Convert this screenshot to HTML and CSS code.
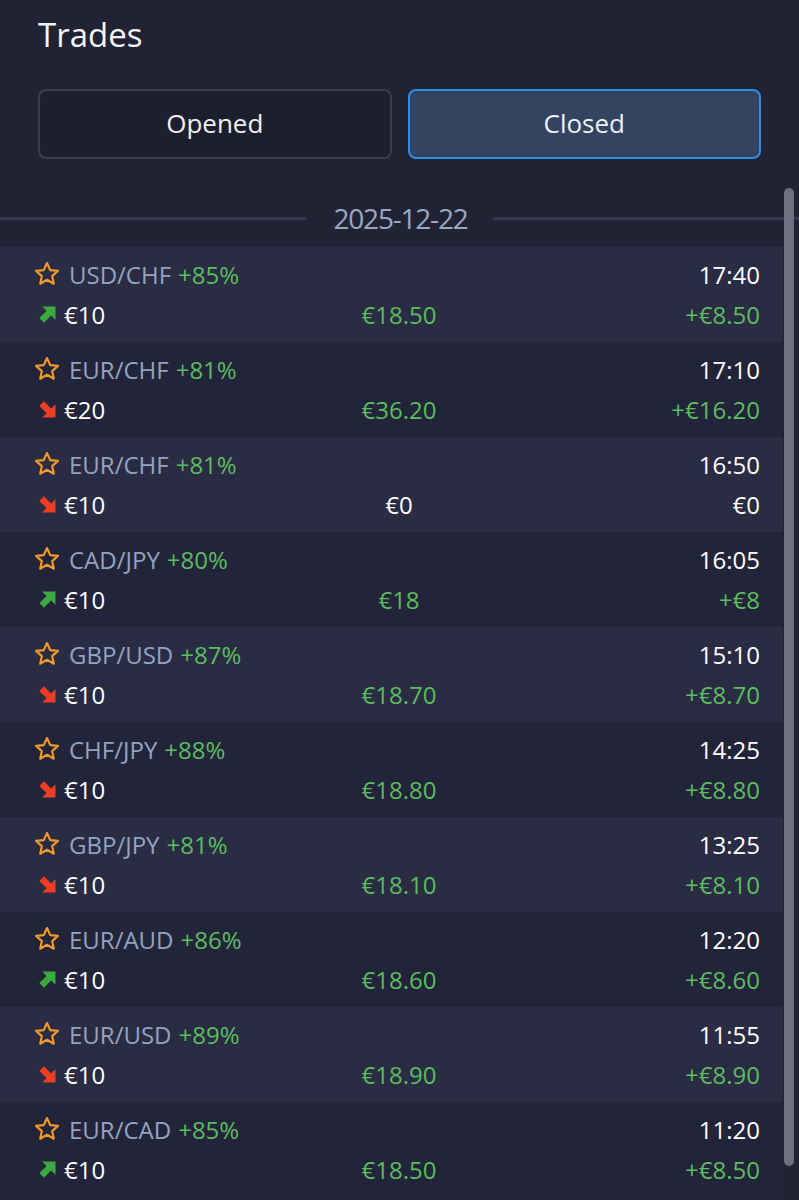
FILE: index.html
```html
<!DOCTYPE html>
<html lang="en">
<head>
<meta charset="utf-8">
<title>Trades</title>
<link rel="stylesheet" href="styles.css">
</head>
<body>
<svg width="0" height="0" class="defs" aria-hidden="true">
  <defs>
    <symbol id="star" viewBox="0 0 24 24">
      <path d="M12 2.6l2.75 6.1 6.65.65-5 4.45 1.45 6.55L12 16.95 6.15 20.35 7.6 13.8l-5-4.45 6.65-.65z" fill="none" stroke="#f29a2e" stroke-width="1.8" stroke-linejoin="round"/>
    </symbol>
    <symbol id="up" viewBox="0 0 16 16">
      <polygon points="3,0.5 15.5,0.5 15.5,13 11.4,8.9 4.6,15.7 0.3,11.4 7.1,4.6" fill="#3aaa3f"/>
    </symbol>
    <symbol id="down" viewBox="0 0 16 16">
      <polygon points="3,15.5 15.5,15.5 15.5,3 11.4,7.1 4.6,0.3 0.3,4.6 7.1,11.4" fill="#ee3d22"/>
    </symbol>
  </defs>
</svg>

<header class="header">
  <h1 class="title">Trades</h1>
  <div class="tabs">
    <button class="tab">Opened</button>
    <button class="tab tab-active">Closed</button>
  </div>
</header>

<section class="list">
  <div class="date-sep"><span class="line"></span><span class="date">2025-12-22</span><span class="line"></span></div>

  <div class="row alt">
    <div class="line1"><svg class="star"><use href="#star"/></svg><span class="pair">USD/CHF</span><span class="pct">+85%</span><span class="time">17:40</span></div>
    <div class="line2"><span class="amt"><svg class="arrow"><use href="#up"/></svg>€10</span><span class="mid green">€18.50</span><span class="profit green">+€8.50</span></div>
  </div>
  <div class="row">
    <div class="line1"><svg class="star"><use href="#star"/></svg><span class="pair">EUR/CHF</span><span class="pct">+81%</span><span class="time">17:10</span></div>
    <div class="line2"><span class="amt"><svg class="arrow"><use href="#down"/></svg>€20</span><span class="mid green">€36.20</span><span class="profit green">+€16.20</span></div>
  </div>
  <div class="row alt">
    <div class="line1"><svg class="star"><use href="#star"/></svg><span class="pair">EUR/CHF</span><span class="pct">+81%</span><span class="time">16:50</span></div>
    <div class="line2"><span class="amt"><svg class="arrow"><use href="#down"/></svg>€10</span><span class="mid">€0</span><span class="profit">€0</span></div>
  </div>
  <div class="row">
    <div class="line1"><svg class="star"><use href="#star"/></svg><span class="pair">CAD/JPY</span><span class="pct">+80%</span><span class="time">16:05</span></div>
    <div class="line2"><span class="amt"><svg class="arrow"><use href="#up"/></svg>€10</span><span class="mid green">€18</span><span class="profit green">+€8</span></div>
  </div>
  <div class="row alt">
    <div class="line1"><svg class="star"><use href="#star"/></svg><span class="pair">GBP/USD</span><span class="pct">+87%</span><span class="time">15:10</span></div>
    <div class="line2"><span class="amt"><svg class="arrow"><use href="#down"/></svg>€10</span><span class="mid green">€18.70</span><span class="profit green">+€8.70</span></div>
  </div>
  <div class="row">
    <div class="line1"><svg class="star"><use href="#star"/></svg><span class="pair">CHF/JPY</span><span class="pct">+88%</span><span class="time">14:25</span></div>
    <div class="line2"><span class="amt"><svg class="arrow"><use href="#down"/></svg>€10</span><span class="mid green">€18.80</span><span class="profit green">+€8.80</span></div>
  </div>
  <div class="row alt">
    <div class="line1"><svg class="star"><use href="#star"/></svg><span class="pair">GBP/JPY</span><span class="pct">+81%</span><span class="time">13:25</span></div>
    <div class="line2"><span class="amt"><svg class="arrow"><use href="#down"/></svg>€10</span><span class="mid green">€18.10</span><span class="profit green">+€8.10</span></div>
  </div>
  <div class="row">
    <div class="line1"><svg class="star"><use href="#star"/></svg><span class="pair">EUR/AUD</span><span class="pct">+86%</span><span class="time">12:20</span></div>
    <div class="line2"><span class="amt"><svg class="arrow"><use href="#up"/></svg>€10</span><span class="mid green">€18.60</span><span class="profit green">+€8.60</span></div>
  </div>
  <div class="row alt">
    <div class="line1"><svg class="star"><use href="#star"/></svg><span class="pair">EUR/USD</span><span class="pct">+89%</span><span class="time">11:55</span></div>
    <div class="line2"><span class="amt"><svg class="arrow"><use href="#down"/></svg>€10</span><span class="mid green">€18.90</span><span class="profit green">+€8.90</span></div>
  </div>
  <div class="row">
    <div class="line1"><svg class="star"><use href="#star"/></svg><span class="pair">EUR/CAD</span><span class="pct">+85%</span><span class="time">11:20</span></div>
    <div class="line2"><span class="amt"><svg class="arrow"><use href="#up"/></svg>€10</span><span class="mid green">€18.50</span><span class="profit green">+€8.50</span></div>
  </div>

  <div class="scrollbar"></div>
</section>
</body>
</html>
```

FILE: styles.css
```css
* { box-sizing: border-box; }

html, body {
  margin: 0;
  padding: 0;
  background: #212335;
  color: #ffffff;
  font-family: "Open Sans", "Noto Sans", sans-serif;
  height: 1200px;
  overflow: hidden;
}

.defs { position: absolute; width: 0; height: 0; }

.header {
  padding: 12px 38px 0;
}

.title {
  margin: 0;
  font-size: 33px;
  font-weight: 400;
  line-height: 46px;
  color: #f4f5f8;
}

.tabs {
  display: grid;
  grid-template-columns: 1fr 1fr;
  gap: 16px;
  margin-top: 31px;
}

.tab {
  height: 70px;
  border-radius: 8px;
  border: 2px solid #393d4e;
  background: #1d1f2f;
  color: #eef0f4;
  font-family: inherit;
  font-size: 26px;
  font-weight: 400;
  padding: 0 0 3px;
}

.tab-active {
  background: #34435f;
  border-color: #2f8ee6;
}

.list {
  position: relative;
  margin-top: 30px;
  padding-right: 16px;
}

.date-sep {
  display: flex;
  align-items: center;
  height: 58px;
  margin-right: -16px;
}

.date-sep .line {
  flex: 1;
  height: 3px;
  background: #343a4f;
}

.date-sep .date {
  padding: 0 25px 0 27px;
  font-size: 28px;
  line-height: 40px;
  color: #98a8c2;
  letter-spacing: -1.2px;
}

.row {
  height: 95px;
  padding: 7px 23px 0 38px;
  background: #22243a;
}

.row.alt {
  background: #292c43;
}

.line1, .line2 {
  display: flex;
  align-items: center;
  height: 40px;
  font-size: 24px;
}

.star {
  width: 28px;
  height: 28px;
  margin-left: -5px;
  margin-right: 8px;
  flex: none;
}

.pair {
  color: #93a3c0;
}

.pct {
  color: #5cbc5f;
  margin-left: 7px;
}

.time {
  margin-left: auto;
  color: #ffffff;
}

.line2 {
  display: grid;
  grid-template-columns: 1fr auto 1fr;
}

.amt {
  display: flex;
  align-items: center;
  color: #ffffff;
}

.arrow {
  width: 17px;
  height: 17px;
  margin-left: 1px;
  margin-right: 8px;
  flex: none;
}

.mid { justify-self: center; color: #ffffff; }
.profit { justify-self: end; color: #ffffff; }
.green { color: #5cbc5f; }

.scrollbar {
  position: absolute;
  top: -1px;
  right: 5px;
  width: 10px;
  height: 978px;
  border-radius: 5px;
  background: #6e6f80;
}
```
